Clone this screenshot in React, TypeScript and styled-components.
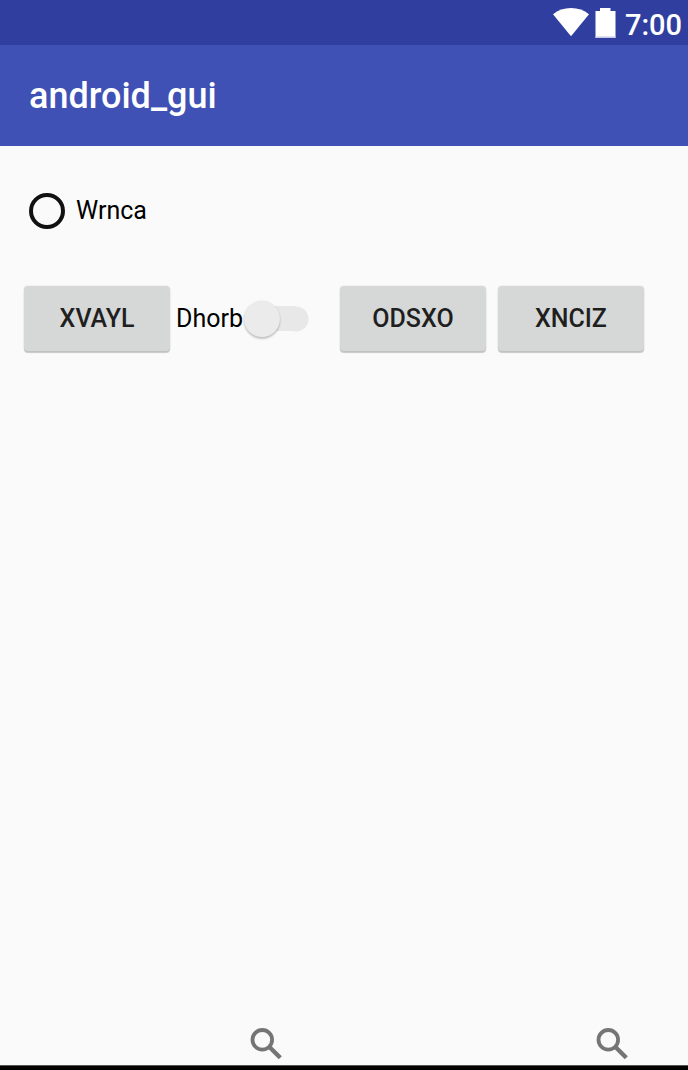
import React from 'react';
import styled, { createGlobalStyle } from 'styled-components';

const GlobalStyle = createGlobalStyle`
  * { box-sizing: border-box; }
  body {
    margin: 0;
    background: #fafafa;
    color: #000;
    font-family: Roboto, "Liberation Sans", sans-serif;
  }
`;

const Screen = styled.div`
  display: flex;
  flex-direction: column;
  min-height: 100vh;
`;

const StatusBar = styled.div`
  display: flex;
  justify-content: flex-end;
  align-items: center;
  height: 45px;
  padding: 0 6px;
  background: #303f9f;
  color: #fff;
`;

const StatusIcons = styled.div`
  display: flex;
  align-items: center;
  gap: 6px;
`;

const Clock = styled.time`
  margin-left: 9px;
  padding-top: 4px;
  font-size: 29px;
  font-weight: 500;
  line-height: 36px;
`;

const AppBar = styled.header`
  display: flex;
  align-items: center;
  height: 101px;
  padding: 0 29px;
  background: #3f51b5;
  color: #fff;
`;

const Title = styled.h1`
  margin: 0;
  font-size: 36px;
  font-weight: 500;
  line-height: 44px;
`;

const Content = styled.main`
  flex: 1;
  padding: 40px 24px;
`;

const RadioLabel = styled.label`
  display: inline-flex;
  align-items: center;
  gap: 11px;
  height: 50px;
  margin-left: 5px;
  font-size: 25px;
  line-height: 30px;
`;

const Radio = styled.input`
  appearance: none;
  width: 36px;
  height: 36px;
  margin: 0;
  border: 4px solid #111;
  border-radius: 50%;

  &:checked {
    background: radial-gradient(#111 45%, transparent 50%);
  }
`;

const Controls = styled.div`
  display: flex;
  align-items: center;
  margin-top: 50px;
`;

const ButtonPair = styled.div`
  display: flex;
  gap: 12px;
`;

const RaisedButton = styled.button`
  width: 146px;
  height: 65px;
  padding: 0;
  border: 0;
  border-radius: 4px;
  background: #d6d8d7;
  box-shadow: 0 2px 1px rgba(0, 0, 0, 0.2), 0 0 2px rgba(0, 0, 0, 0.12);
  color: #1f1f1f;
  font: 500 25px/30px Roboto, "Liberation Sans", sans-serif;
`;

const SwitchLabel = styled.label`
  display: flex;
  align-items: center;
  gap: 1px;
  margin: 0 31px 0 6px;
  font-size: 25px;
  line-height: 30px;
`;

const Switch = styled.input`
  appearance: none;
  display: flex;
  align-items: center;
  width: 65px;
  height: 36px;
  margin: 0;
  border-radius: 18px;
  background: radial-gradient(circle at 52px 18px, #e8e8e8 12px, transparent 13px),
    linear-gradient(#e8e8e8, #e8e8e8) 18px center / 34px 25px no-repeat;

  &::before {
    content: '';
    width: 36px;
    height: 36px;
    border-radius: 50%;
    background: #ebebeb;
    box-shadow: 0 2px 2px rgba(0, 0, 0, 0.2), 0 0 2px rgba(0, 0, 0, 0.1);
  }

  &:checked::before {
    margin-left: 29px;
    background: #ff4081;
  }
`;

const SearchRow = styled.div`
  display: grid;
  grid-template-columns: 1fr 1fr;
  column-gap: 4px;
`;

const SearchCell = styled.div`
  display: flex;
  justify-content: flex-end;
  padding-right: 54px;
`;

const IconButton = styled.button`
  display: flex;
  padding: 0;
  border: 0;
  background: none;
  color: #757575;
`;

const NavEdge = styled.div`
  height: 5px;
  border-top: 1px solid #555;
  background: #000;
`;

const WifiIcon = () => (
  <svg width="36" height="29" viewBox="0 0 36 29" fill="#fff" aria-hidden="true">
    <path d="M0 6.2C5 2 11 0 18 0s13 2 18 6.2L18 28.3Z" />
  </svg>
);

const BatteryIcon = () => (
  <svg width="21" height="30" viewBox="0 0 21 30" fill="#fff" aria-hidden="true">
    <path d="M5 0h10.5v3h5v27H.5V3H5Z" />
    <path d="M.5 28.5h20V30H.5Z" fill="#c5c9e6" />
  </svg>
);

const SearchIcon = () => (
  <svg width="43" height="43" viewBox="0 0 43 43" fill="none" stroke="currentColor" aria-hidden="true">
    <circle cx="17.3" cy="17.8" r="9.8" strokeWidth="3.8" />
    <path d="M24.2 24.7 35.3 35.7" strokeWidth="4.4" />
  </svg>
);

const SearchButton = () => (
  <SearchCell>
    <IconButton type="button" aria-label="Search">
      <SearchIcon />
    </IconButton>
  </SearchCell>
);

export default function App() {
  return (
    <Screen>
      <GlobalStyle />
      <StatusBar>
        <StatusIcons>
          <WifiIcon />
          <BatteryIcon />
        </StatusIcons>
        <Clock>7:00</Clock>
      </StatusBar>
      <AppBar>
        <Title>android_gui</Title>
      </AppBar>
      <Content>
        <RadioLabel>
          <Radio type="radio" name="option" />
          Wrnca
        </RadioLabel>
        <Controls>
          <RaisedButton type="button">XVAYL</RaisedButton>
          <SwitchLabel>
            Dhorb
            <Switch type="checkbox" role="switch" />
          </SwitchLabel>
          <ButtonPair>
            <RaisedButton type="button">ODSXO</RaisedButton>
            <RaisedButton type="button">XNCIZ</RaisedButton>
          </ButtonPair>
        </Controls>
      </Content>
      <SearchRow>
        <SearchButton />
        <SearchButton />
      </SearchRow>
      <NavEdge />
    </Screen>
  );
}
